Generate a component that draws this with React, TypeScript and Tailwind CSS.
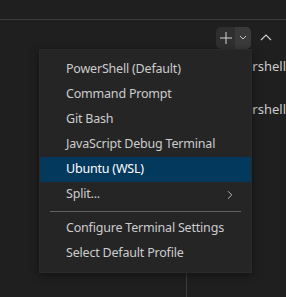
import { ChevronRight } from 'lucide-react';

const profiles = ['PowerShell (Default)', 'Command Prompt', 'Git Bash', 'JavaScript Debug Terminal'];

function MenuItem({ label, active = false, submenu = false }: { label: string; active?: boolean; submenu?: boolean }) {
  return (
    <div
      className={`flex h-[25px] items-center justify-between pl-[26px] pr-[14px] ${
        active ? 'bg-[#04395e] text-white' : 'text-[#cccccc]'
      }`}
    >
      <span>{label}</span>
      {submenu && <ChevronRight size={14} strokeWidth={1.5} className="text-[#cccccc]" />}
    </div>
  );
}

export default function App() {
  return (
    <div
      className="relative h-[297px] w-[286px] overflow-hidden bg-[#1f1f1f] text-[12.5px] tracking-[-0.2px]"
      style={{ fontFamily: '"Noto Sans", "Open Sans", sans-serif' }}
    >
      {/* editor strip */}
      <div className="h-[20px] border-b border-[#3c3c3c] bg-[#1f1f1f]" />

      {/* panel header */}
      <div className="flex h-[35px] items-center justify-end gap-[5px] pr-[10px]">
        <div className="flex h-[22px] w-[35px] overflow-hidden rounded-[5px] bg-[#2f2f2f]">
          <div className="flex w-[19px] items-center justify-center">
            <svg width="14" height="14" viewBox="0 0 14 14" fill="none" stroke="#d4d4d4" strokeWidth="1">
              <path d="M7 1v12M1 7h12" />
            </svg>
          </div>
          <div className="flex w-[16px] items-center justify-center bg-[#3a3a3a]">
            <svg width="8" height="5" viewBox="0 0 8 5" fill="none" stroke="#c5c5c5" strokeWidth="1">
              <path d="M1 1l3 3 3-3" />
            </svg>
          </div>
        </div>
        <div className="flex h-[22px] w-[20px] items-center justify-center">
          <svg width="12" height="7" viewBox="0 0 12 7" fill="none" stroke="#cccccc" strokeWidth="1.2">
            <path d="M1 6l5-5 5 5" />
          </svg>
        </div>
      </div>

      {/* panel body */}
      <div className="flex h-[242px]">
        <div className="w-[195px]" />
        <div className="flex-1 border-l border-[#3c3c3c] pl-[32px] text-[13px] tracking-normal text-[#cccccc]">
          <div className="mt-[1px] flex h-[22px] items-center">powershell</div>
          <div className="mt-[21px] flex h-[22px] items-center">powershell</div>
        </div>
      </div>

      {/* profile dropdown */}
      <div className="absolute left-[39px] top-[49px] w-[213px] border border-[#2a2a2a] bg-[#252526] pb-[6px] pt-[7px] shadow-[0_2px_8px_rgba(0,0,0,0.45)]">
        {profiles.map((p) => (
          <MenuItem key={p} label={p} />
        ))}
        <MenuItem label="Ubuntu (WSL)" active />
        <MenuItem label="Split..." submenu />
        <div className="flex h-[9px] items-center px-[10px]">
          <div className="h-px w-full bg-[#606060]" />
        </div>
        <MenuItem label="Configure Terminal Settings" />
        <MenuItem label="Select Default Profile" />
      </div>
    </div>
  );
}
